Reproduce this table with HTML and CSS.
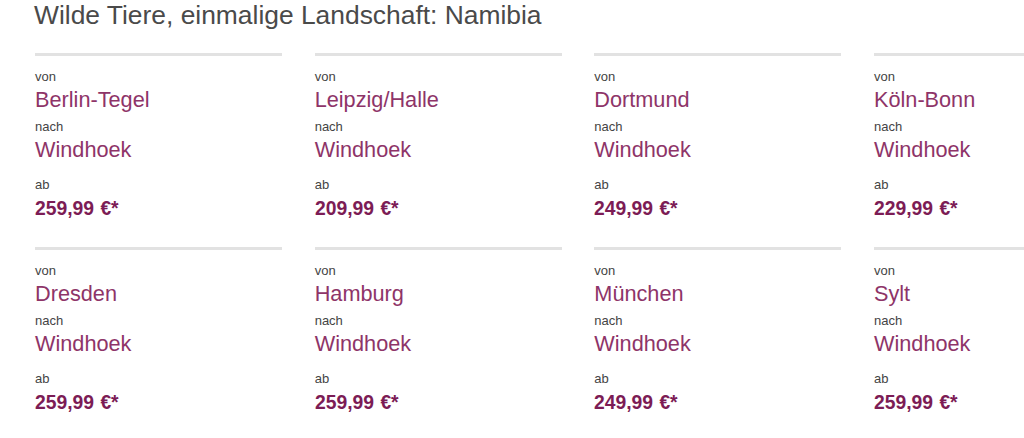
FILE: index.html
```html
<!DOCTYPE html>
<html lang="de">
<head>
<meta charset="utf-8">
<title>Namibia</title>
<link rel="stylesheet" href="styles.css">
</head>
<body>
<main class="page">
  <h1 class="title">Wilde Tiere, einmalige Landschaft: Namibia</h1>
  <div class="grid">
    <div class="card"><div class="label">von</div><div class="city">Berlin-Tegel</div><div class="label gap">nach</div><div class="city dest">Windhoek</div><div class="label ab">ab</div><div class="price"><span class="amount">259,99 €*</span></div></div>
    <div class="card"><div class="label">von</div><div class="city">Leipzig/Halle</div><div class="label gap">nach</div><div class="city dest">Windhoek</div><div class="label ab">ab</div><div class="price"><span class="amount">209,99 €*</span></div></div>
    <div class="card"><div class="label">von</div><div class="city">Dortmund</div><div class="label gap">nach</div><div class="city dest">Windhoek</div><div class="label ab">ab</div><div class="price"><span class="amount">249,99 €*</span></div></div>
    <div class="card"><div class="label">von</div><div class="city">Köln-Bonn</div><div class="label gap">nach</div><div class="city dest">Windhoek</div><div class="label ab">ab</div><div class="price"><span class="amount">229,99 €*</span></div></div>
    <div class="card"><div class="label">von</div><div class="city">Dresden</div><div class="label gap">nach</div><div class="city dest">Windhoek</div><div class="label ab">ab</div><div class="price"><span class="amount">259,99 €*</span></div></div>
    <div class="card"><div class="label">von</div><div class="city">Hamburg</div><div class="label gap">nach</div><div class="city dest">Windhoek</div><div class="label ab">ab</div><div class="price"><span class="amount">259,99 €*</span></div></div>
    <div class="card"><div class="label">von</div><div class="city">München</div><div class="label gap">nach</div><div class="city dest">Windhoek</div><div class="label ab">ab</div><div class="price"><span class="amount">249,99 €*</span></div></div>
    <div class="card"><div class="label">von</div><div class="city">Sylt</div><div class="label gap">nach</div><div class="city dest">Windhoek</div><div class="label ab">ab</div><div class="price"><span class="amount">259,99 €*</span></div></div>
  </div>
</main>
</body>
</html>
```

FILE: styles.css
```css
html, body {
  margin: 0;
  padding: 0;
  overflow: hidden;
  background: #fff;
}
body {
  font-family: "Liberation Sans", Arial, sans-serif;
  color: #444;
}
.page {
  padding: 0 0 0 34px;
}
.title {
  margin: 0 0 23px 0;
  font-size: 26.4px;
  line-height: 30px;
  font-weight: normal;
  color: #4a4a4a;
}
.grid {
  display: grid;
  grid-template-columns: repeat(4, 247px);
  column-gap: 32.67px;
  padding-left: 1px;
}
.card {
  border-top: 3px solid #e2e2e2;
  padding-top: 13px;
  margin-bottom: 29px;
}
.label {
  font-size: 13px;
  line-height: 16px;
  color: #444;
}
.label.gap {
  margin-top: 7px;
}
.label.ab {
  margin-top: 15px;
}
.city {
  margin-top: 3px;
  font-size: 21.7px;
  line-height: 24px;
  color: #8e3468;
}
.city.dest {
  margin-top: 3px;
}
.price {
  margin-top: 5px;
  font-weight: bold;
  font-size: 21px;
  line-height: 20px;
  color: #7c1c55;
}
.amount {
  display: inline-block;
  transform: scaleX(0.92);
  transform-origin: left center;
  word-spacing: 1px;
}
```
